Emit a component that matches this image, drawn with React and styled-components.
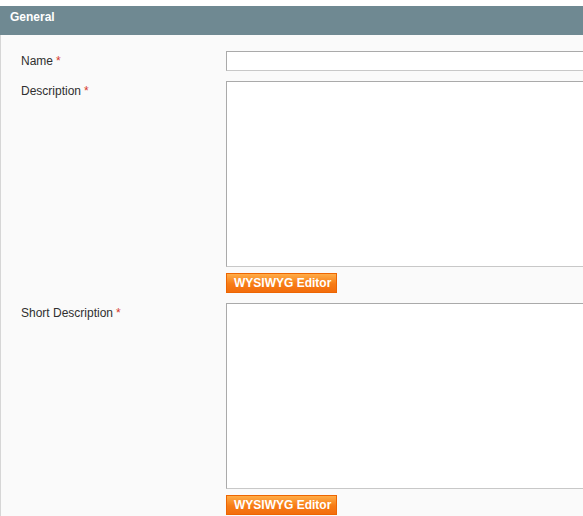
import React from 'react';
import styled, { createGlobalStyle } from 'styled-components';

const GlobalStyle = createGlobalStyle`
  html, body {
    margin: 0;
    padding: 0;
    background: #fff;
    overflow: hidden;
  }
  body {
    font-family: "Liberation Sans", Arial, sans-serif;
    font-size: 12px;
    color: #2f2f2f;
  }
`;

const Section = styled.section`
  padding-top: 6px;
  width: 583px;
  overflow: hidden;
`;

const SectionHead = styled.div`
  height: 29px;
  background: #6f8992;
  display: flex;
  align-items: center;
  padding-left: 10px;
  padding-bottom: 8px;
  box-sizing: border-box;
`;

const SectionTitle = styled.h4`
  margin: 0;
  color: #fff;
  font-size: 12px;
  font-weight: bold;
`;

const Fieldset = styled.div`
  background: #fafafa;
  border-left: 1px solid #d6d6d6;
  padding: 16px 0 0 20px;
  min-height: 480px;
  display: flex;
  flex-direction: column;
  gap: 10px;
`;

const Row = styled.div`
  display: grid;
  grid-template-columns: 205px 420px;
`;

const Label = styled.label`
  padding-top: 3px;
  line-height: 14px;
  color: #2f2f2f;
`;

const Required = styled.span`
  color: #d6382b;
  margin-left: 3px;
`;

const Value = styled.div`
  display: flex;
  flex-direction: column;
  align-items: flex-start;
  gap: 6px;
`;

const TextInput = styled.input`
  box-sizing: border-box;
  width: 100%;
  height: 20px;
  margin: 0;
  padding: 2px;
  border: 1px solid #aaa;
  border-bottom-color: #c8c8c8;
  background: #fff;
  font: inherit;
`;

const TextArea = styled.textarea`
  box-sizing: border-box;
  width: 100%;
  height: 186px;
  margin: 0;
  padding: 2px;
  border: 1px solid #aaa;
  border-bottom-color: #c8c8c8;
  background: #fff;
  font: inherit;
  resize: none;
  display: block;
`;

const OrangeButton = styled.button`
  box-sizing: border-box;
  width: 111px;
  height: 20px;
  margin: 0;
  padding: 0 7px;
  border: 1px solid #ed6502;
  background: linear-gradient(to bottom, #ffac47 0%, #f77c16 55%, #f36d0c 100%);
  color: #fff;
  font-family: "Liberation Sans", Arial, sans-serif;
  font-size: 12px;
  font-weight: bold;
  line-height: 17px;
  text-align: left;
  white-space: nowrap;
  cursor: pointer;
`;

const EditorField = ({ label }) => (
  <Row>
    <Label>
      {label}
      <Required>*</Required>
    </Label>
    <Value>
      <TextArea />
      <OrangeButton type="button">WYSIWYG Editor</OrangeButton>
    </Value>
  </Row>
);

const App = () => (
  <>
    <GlobalStyle />
    <Section>
      <SectionHead>
        <SectionTitle>General</SectionTitle>
      </SectionHead>
      <Fieldset>
        <Row>
          <Label>
            Name<Required>*</Required>
          </Label>
          <Value>
            <TextInput type="text" />
          </Value>
        </Row>
        <EditorField label="Description" />
        <EditorField label="Short Description" />
      </Fieldset>
    </Section>
  </>
);

export default App;
